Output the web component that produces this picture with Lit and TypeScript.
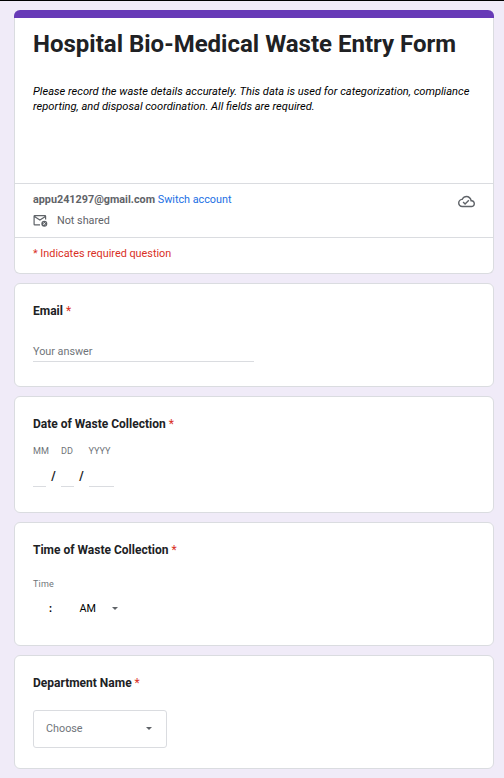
import { LitElement, html, css } from "lit";
import { customElement, property } from "lit/decorators.js";

const caret = html`<svg class="caret" viewBox="0 0 6 3" width="6" height="3"><path d="M0 0h6L3 3z" fill="#5f6368"/></svg>`;

@customElement("form-question")
class FormQuestion extends LitElement {
  @property() label = "";

  static styles = css`
    :host {
      display: block;
      box-sizing: border-box;
      background: #fff;
      border: 1px solid #dadce0;
      border-radius: 6px;
      padding: 18px 18px 0;
    }
    .title {
      font-size: 12px;
      font-weight: 700;
      line-height: 18px;
      color: #202124;
    }
    .star {
      font-weight: 400;
      color: #d93025;
    }
  `;

  render() {
    return html`
      <div class="title">${this.label} <span class="star">*</span></div>
      <slot></slot>
    `;
  }
}

@customElement("app-root")
class AppRoot extends LitElement {
  static styles = css`
    :host {
      display: block;
      box-sizing: border-box;
      height: 778px;
      overflow: hidden;
      background: #f0ebf8;
      border-top: 1px solid #000;
      font-family: Roboto, "Liberation Sans", sans-serif;
      color: #202124;
    }
    .form {
      width: 480px;
      margin: 9px 0 0 14px;
      display: flex;
      flex-direction: column;
      gap: 9px;
    }
    .header {
      box-sizing: border-box;
      height: 264px;
      background: #fff;
      border: 1px solid #dadce0;
      border-top: 0;
      border-radius: 6px;
    }
    .band {
      height: 8px;
      margin: 0 -1px;
      background: #673ab7;
      border-radius: 6px 6px 0 0;
    }
    .intro {
      box-sizing: border-box;
      height: 165px;
      padding: 10px 18px 0;
    }
    h1 {
      margin: 0;
      font-size: 24px;
      font-weight: 700;
      line-height: 32px;
      white-space: nowrap;
    }
    .desc {
      margin-top: 24px;
      font-size: 11.11px;
      font-style: italic;
      line-height: 15px;
      white-space: nowrap;
      color: #000;
    }
    .account {
      box-sizing: border-box;
      height: 55px;
      border: solid #dadce0;
      border-width: 1px 0;
      padding: 7px 18px 0;
      display: flex;
      justify-content: space-between;
      font-size: 10.8px;
      line-height: 17px;
      color: #5f6368;
    }
    .link {
      color: #1a6fe4;
    }
    .shared {
      display: flex;
      align-items: center;
      margin-top: 4px;
      gap: 9px;
    }
    .cloud {
      margin: 1.5px 0 0;
    }
    .note {
      padding: 7px 18px 0;
      font-size: 10.85px;
      line-height: 17px;
      color: #d93025;
    }
    .q-email { height: 104px; }
    .q-date { height: 117px; }
    .q-time { height: 124px; }
    .q-dept { height: 114px; }
    .answer {
      margin-top: 23px;
      width: 221px;
      height: 18px;
      border-bottom: 1px solid #dadce0;
      font-size: 10.8px;
      line-height: 18px;
      color: #70757a;
    }
    .date {
      display: flex;
      margin-top: 12px;
    }
    .part {
      display: flex;
      flex-direction: column;
      width: 13px;
      font-size: 9.1px;
      line-height: 13px;
      color: #70757a;
    }
    .year { width: 25px; }
    .year span:first-child { margin-left: -0.5px; }
    .blank {
      box-sizing: border-box;
      height: 29px;
      border-bottom: 1px solid #dadce0;
    }
    .slash {
      width: 15px;
      text-align: center;
      padding-top: 22px;
      font-size: 12px;
      font-weight: 700;
      line-height: 18px;
    }
    .small {
      margin-top: 19px;
      font-size: 9px;
      line-height: 13px;
      letter-spacing: 0.2px;
      color: #70757a;
    }
    .time {
      display: flex;
      align-items: center;
      margin-top: 9px;
      font-size: 10.8px;
      line-height: 18px;
      color: #000;
    }
    .time .caret { margin-bottom: 1px; }
    .colon {
      width: 30.5px;
      margin-left: 16px;
      font-weight: 700;
    }
    .ampm { width: 32.5px; }
    .choose {
      box-sizing: border-box;
      width: 134px;
      height: 38px;
      margin-top: 18px;
      padding: 0 14px 2px 12px;
      border: 1px solid #dadce0;
      border-radius: 3px;
      display: flex;
      align-items: center;
      justify-content: space-between;
      font-size: 10.8px;
      color: #70757a;
    }
    svg { display: block; }
  `;

  render() {
    return html`
      <main class="form">
        <section class="header">
          <div class="band"></div>
          <div class="intro">
            <h1>Hospital Bio-Medical Waste Entry Form</h1>
            <div class="desc">
              Please record the waste details accurately. This data is used for categorization, compliance<br />reporting,
              and disposal coordination. All fields are required.
            </div>
          </div>
          <div class="account">
            <div>
              <div><b>appu241297@gmail.com</b> <span class="link">Switch account</span></div>
              <div class="shared">
                <svg width="15" height="13" viewBox="0 0 15 13" fill="none" stroke="#5f6368" stroke-width="1.2">
                  <path d="M7 10.9H1.7Q1.1 10.9 1.1 10.3V2.2Q1.1 1.6 1.7 1.6H12Q12.6 1.6 12.6 2.2V5.6M1.4 2.6L6.9 6L12.4 2.6" />
                  <circle cx="11.3" cy="9.7" r="3" fill="#5f6368" stroke="none" />
                  <path d="M10.1 8.5l2.4 2.4M12.5 8.5l-2.4 2.4" stroke="#fff" stroke-width=".8" />
                </svg>
                <span>Not shared</span>
              </div>
            </div>
            <svg class="cloud" width="17" height="17" viewBox="0 0 24 24" fill="#5f6368">
              <path d="M19.35 10.04C18.67 6.59 15.64 4 12 4 9.11 4 6.6 5.64 5.35 8.04 2.34 8.36 0 10.91 0 14c0 3.31 2.69 6 6 6h13c2.76 0 5-2.24 5-5 0-2.64-2.05-4.78-4.65-4.96zM19 18H6c-2.21 0-4-1.79-4-4 0-2.05 1.53-3.76 3.56-3.97l1.07-.11.5-.95C8.08 7.14 9.94 6 12 6c2.62 0 4.88 1.86 5.39 4.43l.3 1.5 1.53.11c1.56.1 2.78 1.41 2.78 2.96 0 1.65-1.35 3-3 3zm-9-3.82l-2.09-2.09L6.5 13.5 10 17l6.01-6.01-1.41-1.41z" />
            </svg>
          </div>
          <div class="note">* Indicates required question</div>
        </section>

        <form-question class="q-email" label="Email">
          <div class="answer">Your answer</div>
        </form-question>

        <form-question class="q-date" label="Date of Waste Collection">
          <div class="date">
            <div class="part"><span>MM</span><span class="blank"></span></div>
            <div class="slash">/</div>
            <div class="part"><span>DD</span><span class="blank"></span></div>
            <div class="slash">/</div>
            <div class="part year"><span>YYYY</span><span class="blank"></span></div>
          </div>
        </form-question>

        <form-question class="q-time" label="Time of Waste Collection">
          <div class="small">Time</div>
          <div class="time"><span class="colon">:</span><span class="ampm">AM</span>${caret}</div>
        </form-question>

        <form-question class="q-dept" label="Department Name">
          <div class="choose"><span>Choose</span>${caret}</div>
        </form-question>
      </main>
    `;
  }
}
